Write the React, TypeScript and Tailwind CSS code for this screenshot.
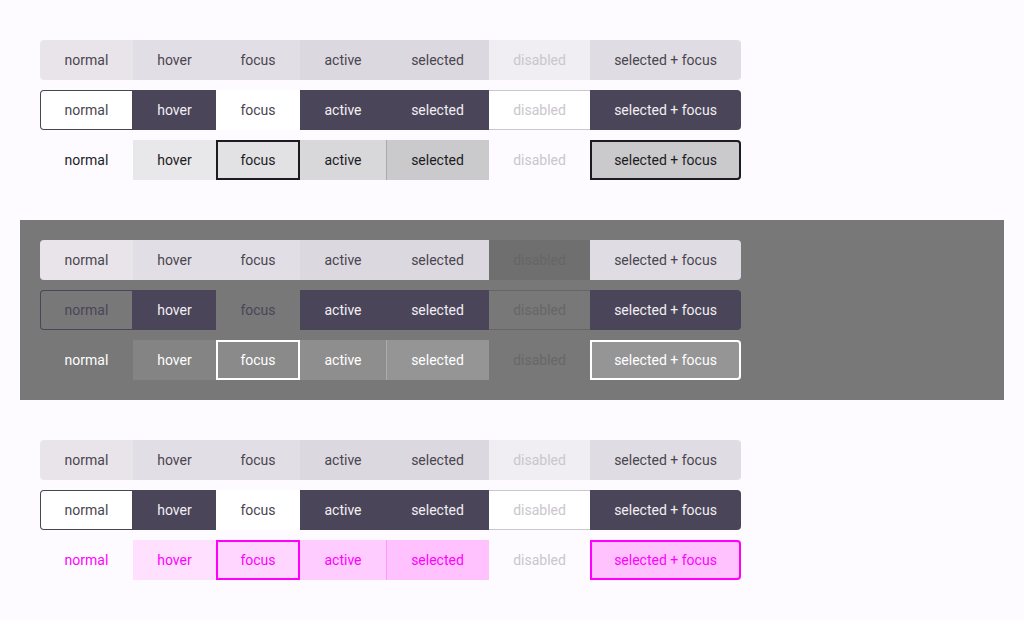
const labels = ["normal", "hover", "focus", "active", "selected", "disabled", "selected + focus"];
const widths = ["w-[93px]", "w-[83px]", "w-[84px]", "w-[86px]", "w-[103px]", "w-[101px]", "w-[151px]"];

// one class string per button, in label order
type Row = string[];

const tonal: Row = [
  "bg-[#e8e4ea] text-[#49454f]",
  "bg-[#e2dee5] text-[#49454f]",
  "bg-[#e2dee5] text-[#49454f]",
  "bg-[#dcd8df] text-[#49454f]",
  "bg-[#dcd8df] text-[#49454f]",
  "bg-[#f0eef2] text-[#cac6cd]",
  "bg-[#e0dce3] text-[#49454f]",
];

const tonalDark: Row = [
  "bg-[#e8e4ea] text-[#49454f]",
  "bg-[#e2dee5] text-[#49454f]",
  "bg-[#e2dee5] text-[#49454f]",
  "bg-[#dcd8df] text-[#49454f]",
  "bg-[#dcd8df] text-[#49454f]",
  "bg-[#6f6f6f] text-[#666666]",
  "bg-[#e0dce3] text-[#49454f]",
];

const outlined: Row = [
  "bg-white text-[#49454f] shadow-[inset_0_0_0_1px_#49454f]",
  "bg-[#4a4558] text-[#f2eff5]",
  "bg-white text-[#49454f]",
  "bg-[#4a4558] text-[#f2eff5]",
  "bg-[#4a4558] text-[#f2eff5]",
  "bg-white text-[#cac6cd] shadow-[inset_0_1px_0_#cac6cd,inset_0_-1px_0_#cac6cd]",
  "bg-[#4a4558] text-[#f2eff5]",
];

const outlinedDark: Row = [
  "text-[#4a4558] shadow-[inset_0_0_0_1px_#4a4558]",
  "bg-[#4a4558] text-[#f2eff5]",
  "text-[#4a4558]",
  "bg-[#4a4558] text-[#f2eff5]",
  "bg-[#4a4558] text-[#f2eff5]",
  "text-[#666666] shadow-[inset_0_1px_0_#666666,inset_0_-1px_0_#666666]",
  "bg-[#4a4558] text-[#f2eff5]",
];

const plain: Row = [
  "text-[#1c1b1f]",
  "bg-[#e8e7e9] text-[#1c1b1f]",
  "bg-[#e2e1e3] text-[#1c1b1f] shadow-[inset_0_0_0_2px_#1c1b1f]",
  "bg-[#d8d7da] text-[#1c1b1f]",
  "bg-[#cac9cc] text-[#1c1b1f] shadow-[inset_1px_0_0_#a9a8ab]",
  "text-[#cac6cd]",
  "bg-[#cac9cc] text-[#1c1b1f] shadow-[inset_0_0_0_2px_#1c1b1f]",
];

const plainDark: Row = [
  "text-white",
  "bg-[#848484] text-white",
  "bg-[#8a8a8a] text-white shadow-[inset_0_0_0_2px_#ffffff]",
  "bg-[#8e8e8e] text-white",
  "bg-[#959595] text-white shadow-[inset_1px_0_0_#acacac]",
  "text-[#676767]",
  "bg-[#959595] text-white shadow-[inset_0_0_0_2px_#ffffff]",
];

const pink: Row = [
  "text-[#ff00ff]",
  "bg-[#ffe0ff] text-[#ff00ff]",
  "bg-[#ffd6ff] text-[#ff00ff] shadow-[inset_0_0_0_2px_#ff00ff]",
  "bg-[#ffccff] text-[#ff00ff]",
  "bg-[#ffc2ff] text-[#ff00ff] shadow-[inset_1px_0_0_#ff99ff]",
  "text-[#cac6cd]",
  "bg-[#ffc2ff] text-[#ff00ff] shadow-[inset_0_0_0_2px_#ff00ff]",
];

function Group({ row }: { row: Row }) {
  return (
    <div className="flex">
      {labels.map((label, i) => (
        <button
          key={label}
          className={`flex h-10 items-center justify-center text-sm ${widths[i]} ${
            i === 0 ? "rounded-l" : ""
          } ${i === labels.length - 1 ? "rounded-r" : ""} ${row[i]}`}
        >
          {label}
        </button>
      ))}
    </div>
  );
}

function Section({ rows, dark }: { rows: Row[]; dark?: boolean }) {
  return (
    <div className={`flex flex-col gap-2.5 p-5 ${dark ? "bg-[#787878]" : ""}`}>
      {rows.map((r, i) => (
        <Group key={i} row={r} />
      ))}
    </div>
  );
}

export default function App() {
  return (
    <div
      className="flex min-h-[620px] flex-col gap-5 bg-[#fdfbff] p-5"
      style={{ fontFamily: "Roboto, 'Liberation Sans', sans-serif" }}
    >
      <Section rows={[tonal, outlined, plain]} />
      <Section rows={[tonalDark, outlinedDark, plainDark]} dark />
      <Section rows={[tonal, outlined, pink]} />
    </div>
  );
}
